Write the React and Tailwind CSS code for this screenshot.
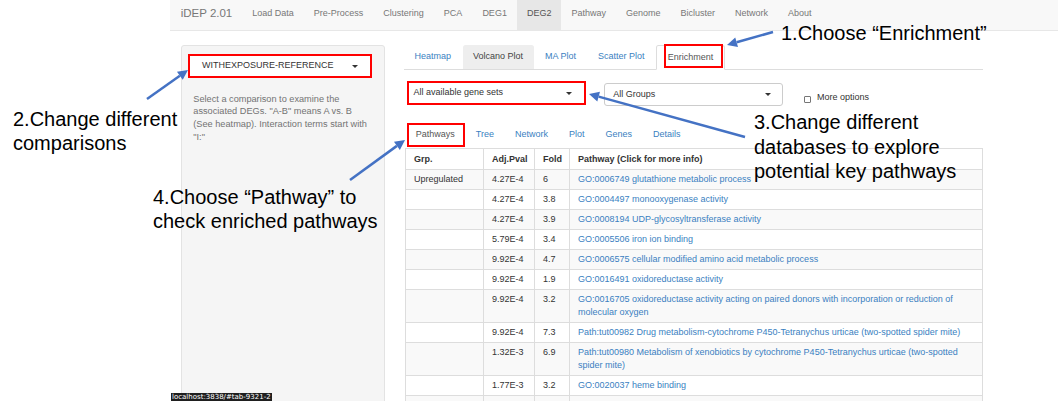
const navItems = ["Load Data", "Pre-Process", "Clustering", "PCA", "DEG1", "DEG2", "Pathway", "Genome", "Bicluster", "Network", "About"];
const mainTabs = ["Heatmap", "Volcano Plot", "MA Plot", "Scatter Plot", "Enrichment"];
const subTabs = ["Pathways", "Tree", "Network", "Plot", "Genes", "Details"];

const rows = [
  ["Upregulated", "4.27E-4", "6", "GO:0006749 glutathione metabolic process"],
  ["", "4.27E-4", "3.8", "GO:0004497 monooxygenase activity"],
  ["", "4.27E-4", "3.9", "GO:0008194 UDP-glycosyltransferase activity"],
  ["", "5.79E-4", "3.4", "GO:0005506 iron ion binding"],
  ["", "9.92E-4", "4.7", "GO:0006575 cellular modified amino acid metabolic process"],
  ["", "9.92E-4", "1.9", "GO:0016491 oxidoreductase activity"],
  ["", "9.92E-4", "3.2", "GO:0016705 oxidoreductase activity acting on paired donors with incorporation or reduction of molecular oxygen"],
  ["", "9.92E-4", "7.3", "Path:tut00982 Drug metabolism-cytochrome P450-Tetranychus urticae (two-spotted spider mite)"],
  ["", "1.32E-3", "6.9", "Path:tut00980 Metabolism of xenobiotics by cytochrome P450-Tetranychus urticae (two-spotted spider mite)"],
  ["", "1.77E-3", "3.2", "GO:0020037 heme binding"],
  // next row only peeks in at the bottom edge
  ["", "", "", ""],
];

function Caret() {
  return <span className="w-0 h-0 border-x-[3px] border-x-transparent border-t-[3.5px] border-t-[#333]" />;
}

function Arrow({ x1, y1, x2, y2 }) {
  const a = Math.atan2(y2 - y1, x2 - x1);
  const len = 10;
  const w = 5;
  const bx = x2 - len * Math.cos(a);
  const by = y2 - len * Math.sin(a);
  const px = -Math.sin(a) * w;
  const py = Math.cos(a) * w;
  return (
    <g>
      <line x1={x1} y1={y1} x2={bx} y2={by} stroke="#4472c4" strokeWidth="2.5" />
      <polygon points={`${x2},${y2} ${bx + px},${by + py} ${bx - px},${by - py}`} fill="#4472c4" />
    </g>
  );
}

export default function App() {
  return (
    <div className="relative w-[1058px] h-[401px] overflow-hidden bg-white text-[#333] font-['Liberation_Sans',Arial,sans-serif]">
      <div className="flex">
        <div className="w-[170px] shrink-0" />
        <div className="flex-1">
          {/* navbar */}
          <div className="flex h-[31px] bg-[#f8f8f8] border-b border-[#e7e7e7]">
            <div className="flex items-center pb-[3px] pl-[10.7px] pr-[10px] text-[11.5px] text-[#777]">iDEP 2.01</div>
            {navItems.map((n) => (
              <div
                key={n}
                className={`flex items-center pb-[3px] px-[10px] text-[9px] ${n === "DEG2" ? "bg-[#e7e7e7] text-[#555]" : "text-[#777]"}`}
              >
                {n}
              </div>
            ))}
          </div>

          <div className="flex pl-[11px] pt-[14px]">
            {/* sidebar */}
            <div className="w-[204px] h-[370px] shrink-0 bg-[#f5f5f5] border border-[#e3e3e3] rounded-[3px] pt-[8px]">
              <div className="ml-[6px] w-[184px] h-[24px] bg-white border-2 border-[#ff0000] flex items-center justify-between pl-[12px] pr-[12px] text-[9px] text-[#333]">
                <span>WITHEXPOSURE-REFERENCE</span>
                <Caret />
              </div>
              <p className="ml-[11.3px] mt-[14.6px] text-[9.2px] leading-[12.7px] text-[#737373]">
                Select a comparison to examine the
                <br />
                associated DEGs. "A-B" means A vs. B
                <br />
                (See heatmap). Interaction terms start with
                <br />
                "I:"
              </p>
            </div>

            {/* main */}
            <div className="ml-[19px] w-[579px]">
              <div className="flex h-[25px] border-b border-[#ddd]">
                {mainTabs.map((t) => (
                  <div
                    key={t}
                    className={`relative flex items-center px-[10.5px] mr-[1px] text-[9px] rounded-t-[2.5px] ${
                      t === "Volcano Plot"
                        ? "bg-[#eee] text-[#444]"
                        : t === "Enrichment"
                        ? "bg-white text-[#555] border border-[#ddd] border-b-white h-[25px]"
                        : "text-[#3a7fc1]"
                    }`}
                  >
                    {t}
                    {t === "Enrichment" && (
                      <span className="absolute left-[7px] top-[-2px] w-[59px] h-[24px] border-2 border-[#ff0000]" />
                    )}
                  </div>
                ))}
              </div>

              <div className="flex items-start mt-[11px]">
                <div className="ml-[3px] w-[179px] h-[24px] bg-white border-2 border-[#ff0000] flex items-center justify-between pl-[4.5px] pr-[12px] text-[9px]">
                  <span>All available gene sets</span>
                  <Caret />
                </div>
                <div className="ml-[18px] mt-[2px] w-[179px] h-[23px] bg-white border border-[#ccc] rounded-[3px] flex items-center justify-between pl-[8.3px] pr-[11px] text-[9px]">
                  <span>All Groups</span>
                  <Caret />
                </div>
                <div className="ml-[21px] mt-[10px] flex items-center gap-[6px] text-[9px]">
                  <span className="w-[7px] h-[7px] mt-[3px] border border-[#767676] rounded-[1px] bg-white" />
                  <span>More options</span>
                </div>
              </div>

              <div className="flex h-[26px] mt-[16px] ml-[1.7px]">
                {subTabs.map((t) => (
                  <div
                    key={t}
                    className={`relative flex items-center px-[10px] mr-[1px] text-[9px] ${t === "Pathways" ? "text-[#555]" : "text-[#3a7fc1]"}`}
                  >
                    {t}
                    {t === "Pathways" && (
                      <span className="absolute left-[1.3px] top-[1px] w-[58px] h-[24px] border-2 border-[#ff0000]" />
                    )}
                  </div>
                ))}
              </div>

              <table className="ml-[1px] w-[578px] table-fixed border-collapse text-[9px] leading-[13px]">
                <colgroup>
                  <col className="w-[78px]" />
                  <col className="w-[51px]" />
                  <col className="w-[35px]" />
                  <col />
                </colgroup>
                <thead>
                  <tr className="bg-white">
                    <th className="border border-[#ddd] px-[8px] py-[3.5px] text-left font-bold">Grp.</th>
                    <th className="border border-[#ddd] px-[8px] py-[3.5px] text-left font-bold">Adj.Pval</th>
                    <th className="border border-[#ddd] px-[8px] py-[3.5px] text-left font-bold">Fold</th>
                    <th className="border border-[#ddd] px-[8px] py-[3.5px] text-left font-bold">Pathway (Click for more info)</th>
                  </tr>
                </thead>
                <tbody>
                  {rows.map((r, i) => (
                    <tr key={i} className={i % 2 === 0 ? "bg-[#f9f9f9]" : "bg-white"}>
                      <td className="border border-[#ddd] px-[8px] py-[3px] h-[20px] align-top">{r[0]}</td>
                      <td className="border border-[#ddd] px-[8px] py-[3px] h-[20px] align-top">{r[1]}</td>
                      <td className="border border-[#ddd] px-[8px] py-[3px] h-[20px] align-top">{r[2]}</td>
                      <td className="border border-[#ddd] px-[8px] py-[3px] h-[20px] align-top text-[#3a7fc1]">{r[3]}</td>
                    </tr>
                  ))}
                </tbody>
              </table>
            </div>
          </div>
        </div>
      </div>

      {/* annotations */}
      <svg className="absolute inset-0 pointer-events-none" width="1058" height="401" viewBox="0 0 1058 401">
        <Arrow x1={773} y1={32} x2={727} y2={45} />
        <Arrow x1={147} y1={99} x2={188} y2={70} />
        <Arrow x1={745} y1={137} x2={589} y2={94} />
        <Arrow x1={350} y1={180} x2={405} y2={140} />
      </svg>
      <div className="absolute left-[781px] top-[21px] text-[20px] leading-[24px] text-black whitespace-nowrap">1.Choose “Enrichment”</div>
      <div className="absolute left-[13px] top-[108px] text-[20px] leading-[23.5px] text-black whitespace-nowrap">
        2.Change different
        <br />
        comparisons
      </div>
      <div className="absolute left-[754px] top-[110px] text-[20px] leading-[24.5px] text-black whitespace-nowrap">
        3.Change different
        <br />
        databases to explore
        <br />
        potential key pathways
      </div>
      <div className="absolute left-[153px] top-[186px] text-[20px] leading-[23.5px] text-black whitespace-nowrap">
        4.Choose “Pathway” to
        <br />
        check enriched pathways
      </div>
      <div className="absolute left-[171px] top-[393px] h-[9px] px-[1px] bg-[#1f1f1f] text-white text-[7px] leading-[9px] font-['DejaVu_Sans',sans-serif] whitespace-nowrap">
        localhost:3838/#tab-9321-2
      </div>
    </div>
  );
}
